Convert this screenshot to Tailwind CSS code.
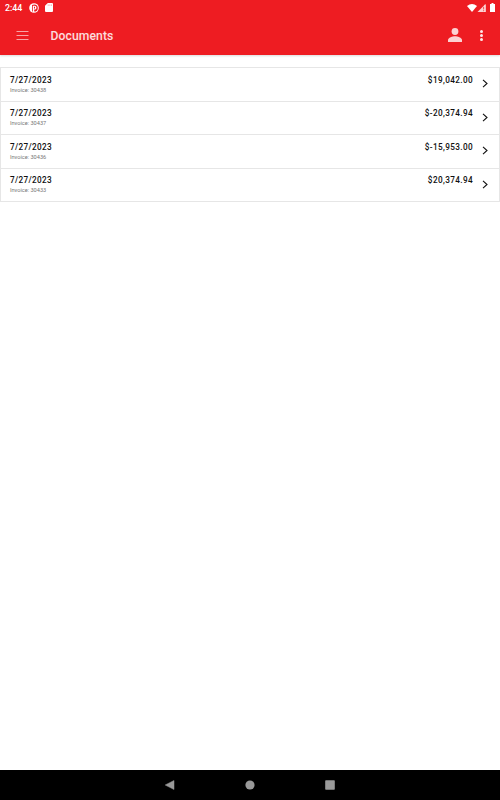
<!DOCTYPE html>
<html lang="en">

<head>
    <meta charset="UTF-8">
    <meta name="viewport" content="width=device-width, initial-scale=1.0">
    <title>Documents</title>
    <script src="https://cdn.jsdelivr.net/npm/@tailwindcss/browser@4"></script>
</head>

<body class="flex h-[800px] w-[500px] flex-col overflow-hidden bg-white font-['Roboto',sans-serif] text-[#111]">
    <header class="h-[55px] shrink-0 bg-[#ee1c22] text-white shadow-[0_1px_2px_rgba(0,0,0,0.15)]">
        <!-- Status bar -->
        <div class="flex h-[15px] items-center px-[5px]">
            <span class="w-6 text-[8.8px] leading-4 font-medium">2:44</span>
            <svg class="h-[10px] w-[10px]" viewBox="0 0 10 10">
                <circle cx="5" cy="5" r="4.8" fill="#fff" />
                <path d="M5.2 1.4a3.6 3.6 0 0 1 0 7.2V6.600h.4a1.800 1.800 0 0 0 0-3.800h-1.800v5.600h-.8V1.900z" fill="#ee1c22" />
                <path d="M5 3.800h1v1.600H5z" fill="#ee1c22" />
            </svg>
            <svg class="ml-[6px] h-[9px] w-[8px]" viewBox="0 0 8 9">
                <path d="M2.8 0H7a1 1 0 0 1 1 1v7a1 1 0 0 1-1 1H1a1 1 0 0 1-1-1V2.8z" fill="#fff" />
                <path d="M3.2 1.4v1.600M4.900 1.400v1.600M6.500 1.400v1.600" stroke="#f58c90" stroke-width=".6" />
            </svg>
            <div class="ml-auto flex items-center">
                <svg class="h-2 w-[10px]" viewBox="0 0 10 8">
                    <path d="M0 2Q5-1.800 10 2L5 8z" fill="#fff" />
                </svg>
                <svg class="h-2 w-[9px]" viewBox="0 0 9 8">
                    <path d="M8.500 0v8H.500z" fill="#fff" fill-opacity=".8" />
                    <path d="M6.700 2.800v2.600M6.700 6.200v1" stroke="#ee1c22" stroke-width=".8" />
                    <path d="M8.200 .6v7.400" stroke="#fff" stroke-width=".7" />
                </svg>
                <svg class="ml-[4px] h-[9px] w-[5px]" viewBox="0 0 5 9">
                    <path d="M1.500 0h2v1H5v8H0V1h1.500z" fill="#fff" />
                </svg>
            </div>
        </div>

        <!-- App bar -->
        <div class="flex h-10 items-center pr-[17px] pl-4">
            <svg class="h-[9px] w-[13px]" viewBox="0 0 13 9">
                <path d="M.5 .5h12M.5 4.500h12M.5 8.500h12" stroke="#fff" stroke-opacity=".6" />
            </svg>
            <h1 class="ml-[21.5px] pt-px text-[12.2px] leading-4 font-medium tracking-[0.07px] text-white/85">Documents</h1>
            <svg class="ml-auto h-[14px] w-[14px]" viewBox="0 0 14 14" fill="#fff" fill-opacity=".8">
                <circle cx="7" cy="3.500" r="3.400" />
                <path d="M0 14v-2c0-2.500 4.600-3.800 7-3.800s7 1.300 7 3.800v2z" />
            </svg>
            <svg class="ml-[18px] h-[11px] w-[3px]" viewBox="0 0 3 11" fill="#fff" fill-opacity=".9">
                <circle cx="1.500" cy="1.500" r="1.500" />
                <circle cx="1.500" cy="5.500" r="1.500" />
                <circle cx="1.500" cy="9.500" r="1.500" />
            </svg>
        </div>
    </header>

    <!-- Document list -->
    <main class="mt-3 flex-1">
        <ul class="border-x border-t border-[#e6e6e6]">
            <li class="flex h-[34px] border-b border-[#e6e6e6] pr-[11px] pl-[9px]">
                <div class="pt-[7px]">
                    <p class="text-[8.2px] leading-[10px] font-medium tracking-[0.33px]">7/27/2023</p>
                    <p class="text-[5.6px] leading-[10px] text-[#777]">Invoice: 30438</p>
                </div>
                <span class="ml-auto pt-[7px] text-[8.2px] leading-[10px] font-medium tracking-[0.38px]">$19,042.00</span>
                <svg class="mt-[11px] ml-[9px] h-[9px] w-[6px]" viewBox="0 0 6 9" fill="none">
                    <path d="M1 .8l4 3.700-4 3.700" stroke="#111" stroke-width="1.100" />
                </svg>
            </li>
            <li class="flex h-[33px] border-b border-[#e6e6e6] pr-[11px] pl-[9px]">
                <div class="pt-[6px]">
                    <p class="text-[8.2px] leading-[10px] font-medium tracking-[0.33px]">7/27/2023</p>
                    <p class="text-[5.6px] leading-[11px] text-[#777]">Invoice: 30437</p>
                </div>
                <span class="ml-auto pt-[6px] text-[8.2px] leading-[10px] font-medium tracking-[0.38px]">$-20,374.94</span>
                <svg class="mt-[11px] ml-[9px] h-[9px] w-[6px]" viewBox="0 0 6 9" fill="none">
                    <path d="M1 .8l4 3.700-4 3.700" stroke="#111" stroke-width="1.100" />
                </svg>
            </li>
            <li class="flex h-[34px] border-b border-[#e6e6e6] pr-[11px] pl-[9px]">
                <div class="pt-[7px]">
                    <p class="text-[8.2px] leading-[10px] font-medium tracking-[0.33px]">7/27/2023</p>
                    <p class="text-[5.6px] leading-[10px] text-[#777]">Invoice: 30436</p>
                </div>
                <span class="ml-auto pt-[7px] text-[8.2px] leading-[10px] font-medium tracking-[0.38px]">$-15,953.00</span>
                <svg class="mt-[11px] ml-[9px] h-[9px] w-[6px]" viewBox="0 0 6 9" fill="none">
                    <path d="M1 .8l4 3.700-4 3.700" stroke="#111" stroke-width="1.100" />
                </svg>
            </li>
            <li class="flex h-[33px] border-b border-[#e6e6e6] pr-[11px] pl-[9px]">
                <div class="pt-[6px]">
                    <p class="text-[8.2px] leading-[10px] font-medium tracking-[0.33px]">7/27/2023</p>
                    <p class="text-[5.6px] leading-[10px] text-[#777]">Invoice: 30433</p>
                </div>
                <span class="ml-auto pt-[6px] text-[8.2px] leading-[10px] font-medium tracking-[0.38px]">$20,374.94</span>
                <svg class="mt-[11px] ml-[9px] h-[9px] w-[6px]" viewBox="0 0 6 9" fill="none">
                    <path d="M1 .8l4 3.700-4 3.700" stroke="#111" stroke-width="1.100" />
                </svg>
            </li>
        </ul>
    </main>

    <!-- System navigation -->
    <nav class="flex h-[30px] shrink-0 items-center justify-center gap-[70px] bg-black text-[#999]">
        <svg class="h-[10px] w-[10px]" viewBox="0 0 10 10" fill="currentColor">
            <path d="M9 .500v9L.200 5z" stroke="currentColor" stroke-width=".5" stroke-linejoin="round" />
        </svg>
        <svg class="h-[10px] w-[10px]" viewBox="0 0 10 10" fill="currentColor">
            <circle cx="5" cy="5" r="4.600" />
        </svg>
        <svg class="h-[10px] w-[10px]" viewBox="0 0 10 10" fill="currentColor">
            <rect x=".2" y=".2" width="9.600" height="9.600" rx=".7" />
        </svg>
    </nav>
</body>

</html>
